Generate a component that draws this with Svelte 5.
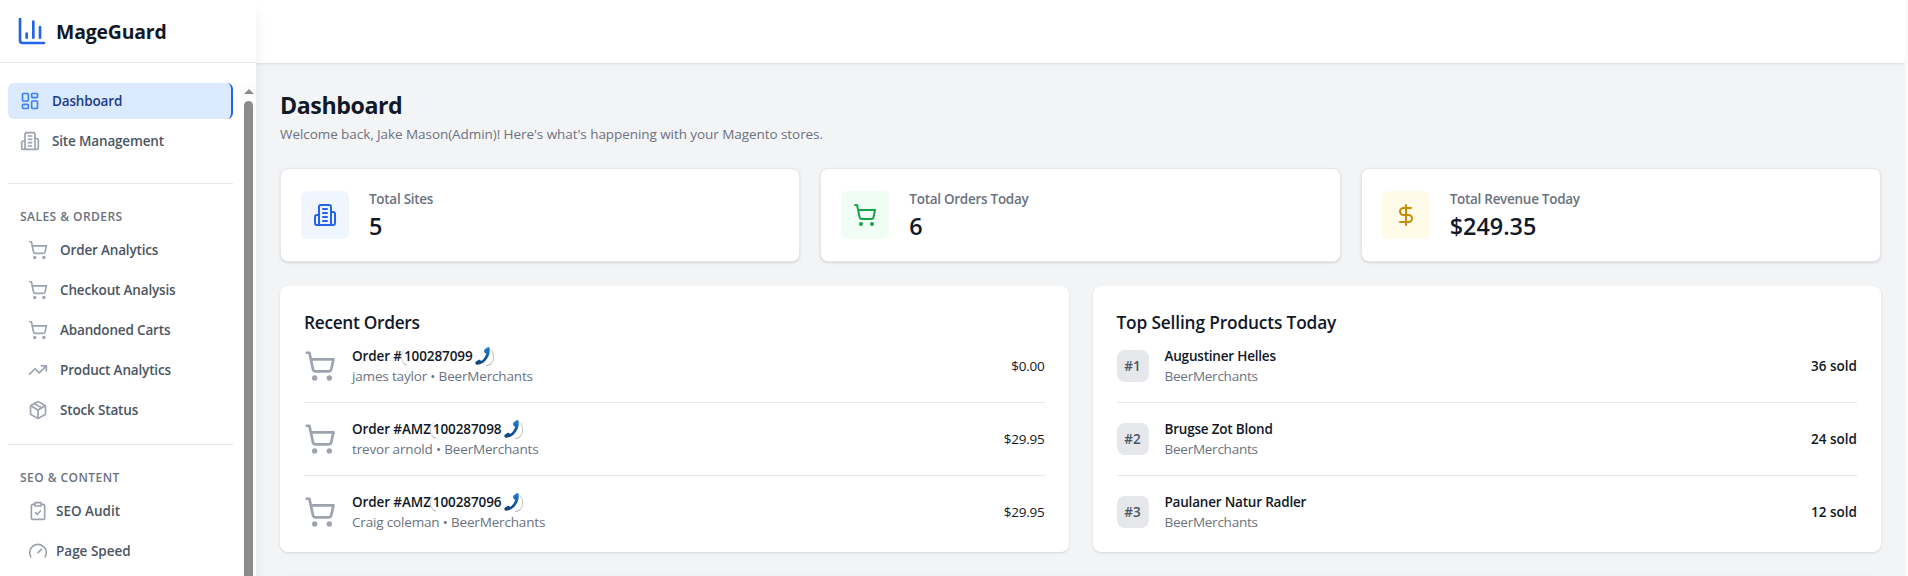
<script lang="ts">
  type NavItem = { label: string; icon: string; active?: boolean };

  const icons: Record<string, string> = {
    dashboard:
      '<rect width="7" height="9" x="3" y="3" rx="1"/><rect width="7" height="5" x="14" y="3" rx="1"/><rect width="7" height="9" x="14" y="12" rx="1"/><rect width="7" height="5" x="3" y="16" rx="1"/>',
    building:
      '<path d="M6 22V4a2 2 0 0 1 2-2h8a2 2 0 0 1 2 2v18Z"/><path d="M6 12H4a2 2 0 0 0-2 2v6a2 2 0 0 0 2 2h2"/><path d="M18 9h2a2 2 0 0 1 2 2v9a2 2 0 0 1-2 2h-2"/><path d="M10 6h4M10 10h4M10 14h4M10 18h4"/>',
    cart:
      '<circle cx="8" cy="21" r="1"/><circle cx="19" cy="21" r="1"/><path d="M2.05 2.05h2l2.66 12.42a2 2 0 0 0 2 1.58h9.78a2 2 0 0 0 1.95-1.57l1.65-7.43H5.12"/>',
    trending: '<path d="M22 7 13.5 15.5 8.5 10.5 2 17"/><path d="M16 7h6v6"/>',
    box:
      '<path d="m7.5 4.27 9 5.15"/><path d="M21 8a2 2 0 0 0-1-1.73l-7-4a2 2 0 0 0-2 0l-7 4A2 2 0 0 0 3 8v8a2 2 0 0 0 1 1.73l7 4a2 2 0 0 0 2 0l7-4A2 2 0 0 0 21 16Z"/><path d="m3.3 7 8.7 5 8.7-5"/><path d="M12 22V12"/>',
    clipboard:
      '<rect width="8" height="4" x="8" y="2" rx="1"/><path d="M16 4h2a2 2 0 0 1 2 2v14a2 2 0 0 1-2 2H6a2 2 0 0 1-2-2V6a2 2 0 0 1 2-2h2"/><path d="m9 14 2 2 4-4"/>',
    gauge: '<path d="m12 14 4-4"/><path d="M3.34 19a10 10 0 1 1 17.32 0"/>',
    dollar: '<path d="M12 2v20"/><path d="M17 5H9.5a3.5 3.5 0 0 0 0 7h5a3.5 3.5 0 0 1 0 7H6"/>',
    chart: '<path d="M3 3v16a2 2 0 0 0 2 2h16"/><path d="M18 17V9M13 17V5M8 17v-3"/>'
  };

  const mainNav: NavItem[] = [
    { label: 'Dashboard', icon: 'dashboard', active: true },
    { label: 'Site Management', icon: 'building' }
  ];

  const salesNav: NavItem[] = [
    { label: 'Order Analytics', icon: 'cart' },
    { label: 'Checkout Analysis', icon: 'cart' },
    { label: 'Abandoned Carts', icon: 'cart' },
    { label: 'Product Analytics', icon: 'trending' },
    { label: 'Stock Status', icon: 'box' }
  ];

  const seoNav: NavItem[] = [
    { label: 'SEO Audit', icon: 'clipboard' },
    { label: 'Page Speed', icon: 'gauge' }
  ];

  const stats = [
    { label: 'Total Sites', value: '5', icon: 'building', tone: 'blue' },
    { label: 'Total Orders Today', value: '6', icon: 'cart', tone: 'green' },
    { label: 'Total Revenue Today', value: '$249.35', icon: 'dollar', tone: 'yellow' }
  ];

  const orders = [
    { prefix: '', number: '100287099', customer: 'james taylor', site: 'BeerMerchants', total: '$0.00' },
    { prefix: 'AMZ', number: '100287098', customer: 'trevor arnold', site: 'BeerMerchants', total: '$29.95' },
    { prefix: 'AMZ', number: '100287096', customer: 'Craig coleman', site: 'BeerMerchants', total: '$29.95' }
  ];

  const products = [
    { name: 'Augustiner Helles', site: 'BeerMerchants', sold: 36 },
    { name: 'Brugse Zot Blond', site: 'BeerMerchants', sold: 24 },
    { name: 'Paulaner Natur Radler', site: 'BeerMerchants', sold: 12 }
  ];
</script>

{#snippet icon(name: string, size: number)}
  <svg
    class="icon"
    width={size}
    height={size}
    viewBox="0 0 24 24"
    fill="none"
    stroke="currentColor"
    stroke-width="2"
    stroke-linecap="round"
    stroke-linejoin="round"
    aria-hidden="true"
  >
    {@html icons[name]}
  </svg>
{/snippet}

{#snippet links(items: NavItem[], kind: string)}
  <div class="links {kind}">
    {#each items as item}
      <a href="#top" class="link" class:active={item.active}>
        {@render icon(item.icon, 20)}
        <span>{item.label}</span>
      </a>
    {/each}
  </div>
{/snippet}

<div class="app">
  <aside class="sidebar">
    <div class="brand">
      {@render icon('chart', 32)}
      <span class="brand-name">MageGuard</span>
    </div>
    <div class="nav-wrap">
      <nav class="nav">
        {@render links(mainNav, 'main-links')}
        <div class="group first">
          <h3 class="group-title">Sales &amp; Orders</h3>
          {@render links(salesNav, 'sub-links')}
        </div>
        <div class="group">
          <h3 class="group-title">SEO &amp; Content</h3>
          {@render links(seoNav, 'sub-links tight')}
        </div>
      </nav>
      <div class="scrollbar">
        <div class="arrow"></div>
        <div class="thumb"></div>
      </div>
    </div>
  </aside>

  <div class="page">
    <header class="topbar"></header>
    <main class="content">
      <h1>Dashboard</h1>
      <p class="welcome">Welcome back, Jake Mason(Admin)! Here's what's happening with your Magento stores.</p>

      <div class="stats">
        {#each stats as stat}
          <div class="stat">
            <div class="stat-icon {stat.tone}">{@render icon(stat.icon, 24)}</div>
            <div>
              <div class="stat-label">{stat.label}</div>
              <div class="stat-value">{stat.value}</div>
            </div>
          </div>
        {/each}
      </div>

      <div class="panels">
        <section class="panel">
          <h2>Recent Orders</h2>
          <ul>
            {#each orders as order}
              <li>
                <span class="order-icon">{@render icon('cart', 32)}</span>
                <div class="info">
                  <div class="name order-name">
                    <span class="order-label">Order #{order.prefix}</span><span class="call">
                      <span class="number">{order.number}</span>
                      <svg class="phone" width="16" height="18" viewBox="0 0 16 18" aria-hidden="true">
                        <defs>
                          <linearGradient id="handset" x1="0" y1="0" x2="0" y2="1">
                            <stop offset="0" stop-color="#1f7fd6" />
                            <stop offset="1" stop-color="#0b3f75" />
                          </linearGradient>
                        </defs>
                        <path
                          fill="url(#handset)"
                          d="M9.9 2.2 12.6.3c.8-.5 1.6-.2 1.9.7.9 4.6-.7 9.5-4.3 12.9-2.2 2.1-4.900 3.400-7.800 3.800-1 .1-1.800-.5-2-1.500-.1-.7.1-1.200.7-1.600l2.300-1.600c.6-.4 1.200-.4 1.700.1l1 1c2.400-1.700 4.200-4.100 5.100-7.300l-1.300-.8c-1-.7-1.100-2.900 0-3.800Z"
                        />
                      </svg>
                    </span>
                  </div>
                  <div class="detail">{order.customer} • {order.site}</div>
                </div>
                <span class="total">{order.total}</span>
              </li>
            {/each}
          </ul>
        </section>

        <section class="panel">
          <h2 class="wide">Top Selling Products Today</h2>
          <ul>
            {#each products as product, i}
              <li>
                <span class="rank">#{i + 1}</span>
                <div class="info">
                  <div class="name">{product.name}</div>
                  <div class="detail site">{product.site}</div>
                </div>
                <span class="sold">{product.sold} sold</span>
              </li>
            {/each}
          </ul>
        </section>

        <section class="panel next"></section>
      </div>
    </main>
  </div>
  <div class="edge"></div>
</div>

<style>
  :global(body) {
    margin: 0;
    background: #f3f4f6;
  }

  .app {
    display: flex;
    height: 576px;
    overflow: hidden;
    font-family: 'Open Sans', 'Noto Sans', sans-serif;
    font-size: 13.5px;
    line-height: 20px;
    color: #111827;
    background: #f3f4f6;
  }

  .icon {
    display: block;
    flex-shrink: 0;
  }

  h1, h2, h3, p, ul {
    margin: 0;
    padding: 0;
  }

  /* Sidebar */
  .sidebar {
    position: relative;
    z-index: 2;
    width: 256px;
    flex-shrink: 0;
    display: flex;
    flex-direction: column;
    background: #fff;
    box-shadow: 0 10px 15px -3px rgba(0, 0, 0, 0.1), 0 4px 6px -4px rgba(0, 0, 0, 0.1);
  }

  .brand {
    display: flex;
    align-items: center;
    gap: 8px;
    height: 62px;
    padding-left: 16px;
    flex-shrink: 0;
    color: #2563eb;
    border-bottom: 1px solid #e5e7eb;
  }

  .brand-name {
    font-size: 19.4px;
    font-weight: 700;
    line-height: 28px;
    letter-spacing: -0.15px;
    color: #111827;
    padding-top: 2px;
  }

  .nav-wrap {
    display: flex;
    flex: 1;
    min-height: 0;
    margin-top: 20px;
    overflow: hidden;
  }

  .nav {
    width: 225px;
    padding: 0 8px;
    overflow: hidden;
  }

  .links {
    display: flex;
    flex-direction: column;
    gap: 4px;
  }

  .link {
    display: flex;
    align-items: center;
    gap: 12px;
    height: 36px;
    padding-left: 12px;
    box-sizing: border-box;
    border-radius: 6px;
    font-weight: 600;
    letter-spacing: -0.16px;
    color: #4b5563;
    text-decoration: none;
  }

  .link .icon {
    color: #9ca3af;
  }

  .active {
    background: #dbeafe;
    color: #1e3a8a;
    border-right: 2px solid #2563eb;
  }

  .active .icon {
    color: #3b82f6;
  }

  .sub-links .link {
    padding-left: 20px;
  }

  .tight .link {
    gap: 8px;
    letter-spacing: 0;
  }

  .group {
    margin-top: 16px;
    padding-top: 25px;
    border-top: 1px solid #e5e7eb;
  }

  .first {
    margin-top: 24px;
  }

  .group-title {
    padding-left: 12px;
    margin-bottom: 7px;
    font-size: 12px;
    font-weight: 550;
    line-height: 16px;
    letter-spacing: 0.45px;
    text-transform: uppercase;
    color: #6b7280;
  }

  .scrollbar {
    width: 15px;
    display: flex;
    flex-direction: column;
    align-items: center;
    background: #fcfcfc;
  }

  .arrow {
    margin-top: 6px;
    border: 5px solid transparent;
    border-top: 0;
    border-bottom: 5px solid #8b8b8b;
  }

  .thumb {
    width: 9px;
    height: 600px;
    margin-top: 7px;
    flex-shrink: 0;
    border-radius: 5px;
    background: #8b8b8b;
  }

  /* Main column */
  .page {
    flex: 1;
    min-width: 0;
  }

  .topbar {
    height: 63px;
    background: #fff;
    box-shadow: 0 1px 3px rgba(0, 0, 0, 0.07), 0 1px 2px -1px rgba(0, 0, 0, 0.07);
  }

  .content {
    padding: 26px 24px 0;
  }

  h1 {
    font-size: 23.2px;
    font-weight: 700;
    line-height: 32px;
    letter-spacing: -0.43px;
  }

  .welcome {
    margin-top: 3px;
    color: #6b7280;
    letter-spacing: -0.065px;
  }

  .stats {
    display: grid;
    grid-template-columns: repeat(3, 1fr);
    gap: 20px;
    margin-top: 24px;
  }

  .stat {
    display: flex;
    align-items: center;
    gap: 20px;
    padding: 20px;
    background: #fff;
    border: 1px solid #e5e7eb;
    border-radius: 8px;
    box-shadow: 0 1px 3px rgba(0, 0, 0, 0.1), 0 1px 2px -1px rgba(0, 0, 0, 0.1);
  }

  .stat-icon {
    display: grid;
    place-items: center;
    width: 48px;
    height: 48px;
    border-radius: 6px;
  }

  .blue {
    color: #2563eb;
    background: #eff6ff;
  }

  .green {
    color: #16a34a;
    background: #f0fdf4;
  }

  .yellow {
    color: #ca8a04;
    background: #fefce8;
  }

  .stat-label {
    font-weight: 600;
    letter-spacing: -0.28px;
    color: #6b7280;
  }

  .stat-value {
    padding-top: 2px;
    font-size: 23.4px;
    font-weight: 600;
    line-height: 30px;
  }

  .panels {
    display: grid;
    grid-template-columns: 1fr 1fr;
    gap: 24px;
    margin-top: 24px;
  }

  .panel {
    padding: 25px 24px 20px;
    background: #fff;
    border-radius: 8px;
    box-shadow: 0 1px 3px rgba(0, 0, 0, 0.1), 0 1px 2px -1px rgba(0, 0, 0, 0.1);
  }

  .next {
    grid-column: span 2;
  }

  h2 {
    margin-bottom: 11px;
    font-size: 17.3px;
    font-weight: 600;
    line-height: 24px;
    letter-spacing: -0.3px;
  }

  .wide {
    letter-spacing: -0.15px;
  }

  ul {
    list-style: none;
  }

  li {
    display: flex;
    align-items: center;
    gap: 16px;
    height: 40px;
    padding-bottom: 16px;
  }

  li + li {
    padding-top: 16px;
    border-top: 1px solid #e5e7eb;
  }

  li:last-child {
    padding-bottom: 0;
  }

  .order-icon {
    color: #9ca3af;
  }

  .info {
    flex: 1;
  }

  .name {
    font-weight: 600;
    letter-spacing: -0.2px;
  }

  .order-name {
    display: flex;
  }

  .order-label {
    letter-spacing: -0.1px;
  }

  .detail {
    color: #6b7280;
    letter-spacing: -0.17px;
  }

  .site {
    letter-spacing: -0.25px;
  }

  /* Click-to-call highlight round the digits */
  .call {
    position: relative;
    display: flex;
    align-items: center;
    gap: 4px;
    width: 88px;
    height: 20px;
    padding-left: 2px;
  }

  .call::before,
  .call::after {
    content: '';
    position: absolute;
    top: 2px;
    width: 8px;
    height: 18px;
    box-sizing: border-box;
    border-bottom: 1px solid #b4b4b4;
  }

  .call::before {
    left: -1px;
    border-left: 1px solid #cfcfcf;
    border-radius: 9px 0 0 9px;
    clip-path: inset(0 2px 0 0);
  }

  .call::after {
    right: -2px;
    border-right: 1px solid #c4c4c4;
    border-radius: 0 9px 9px 0;
  }

  .number {
    width: 67px;
    letter-spacing: -0.1px;
  }

  .phone {
    position: relative;
    z-index: 1;
    flex-shrink: 0;
  }

  .total {
    letter-spacing: -0.23px;
  }

  .sold {
    font-weight: 600;
  }

  .rank {
    display: grid;
    place-items: center;
    width: 32px;
    height: 32px;
    border-radius: 8px;
    font-weight: 600;
    color: #4b5563;
    background: #e5e7eb;
  }

  .edge {
    width: 3px;
    flex-shrink: 0;
    background: #fafafa;
  }
</style>
